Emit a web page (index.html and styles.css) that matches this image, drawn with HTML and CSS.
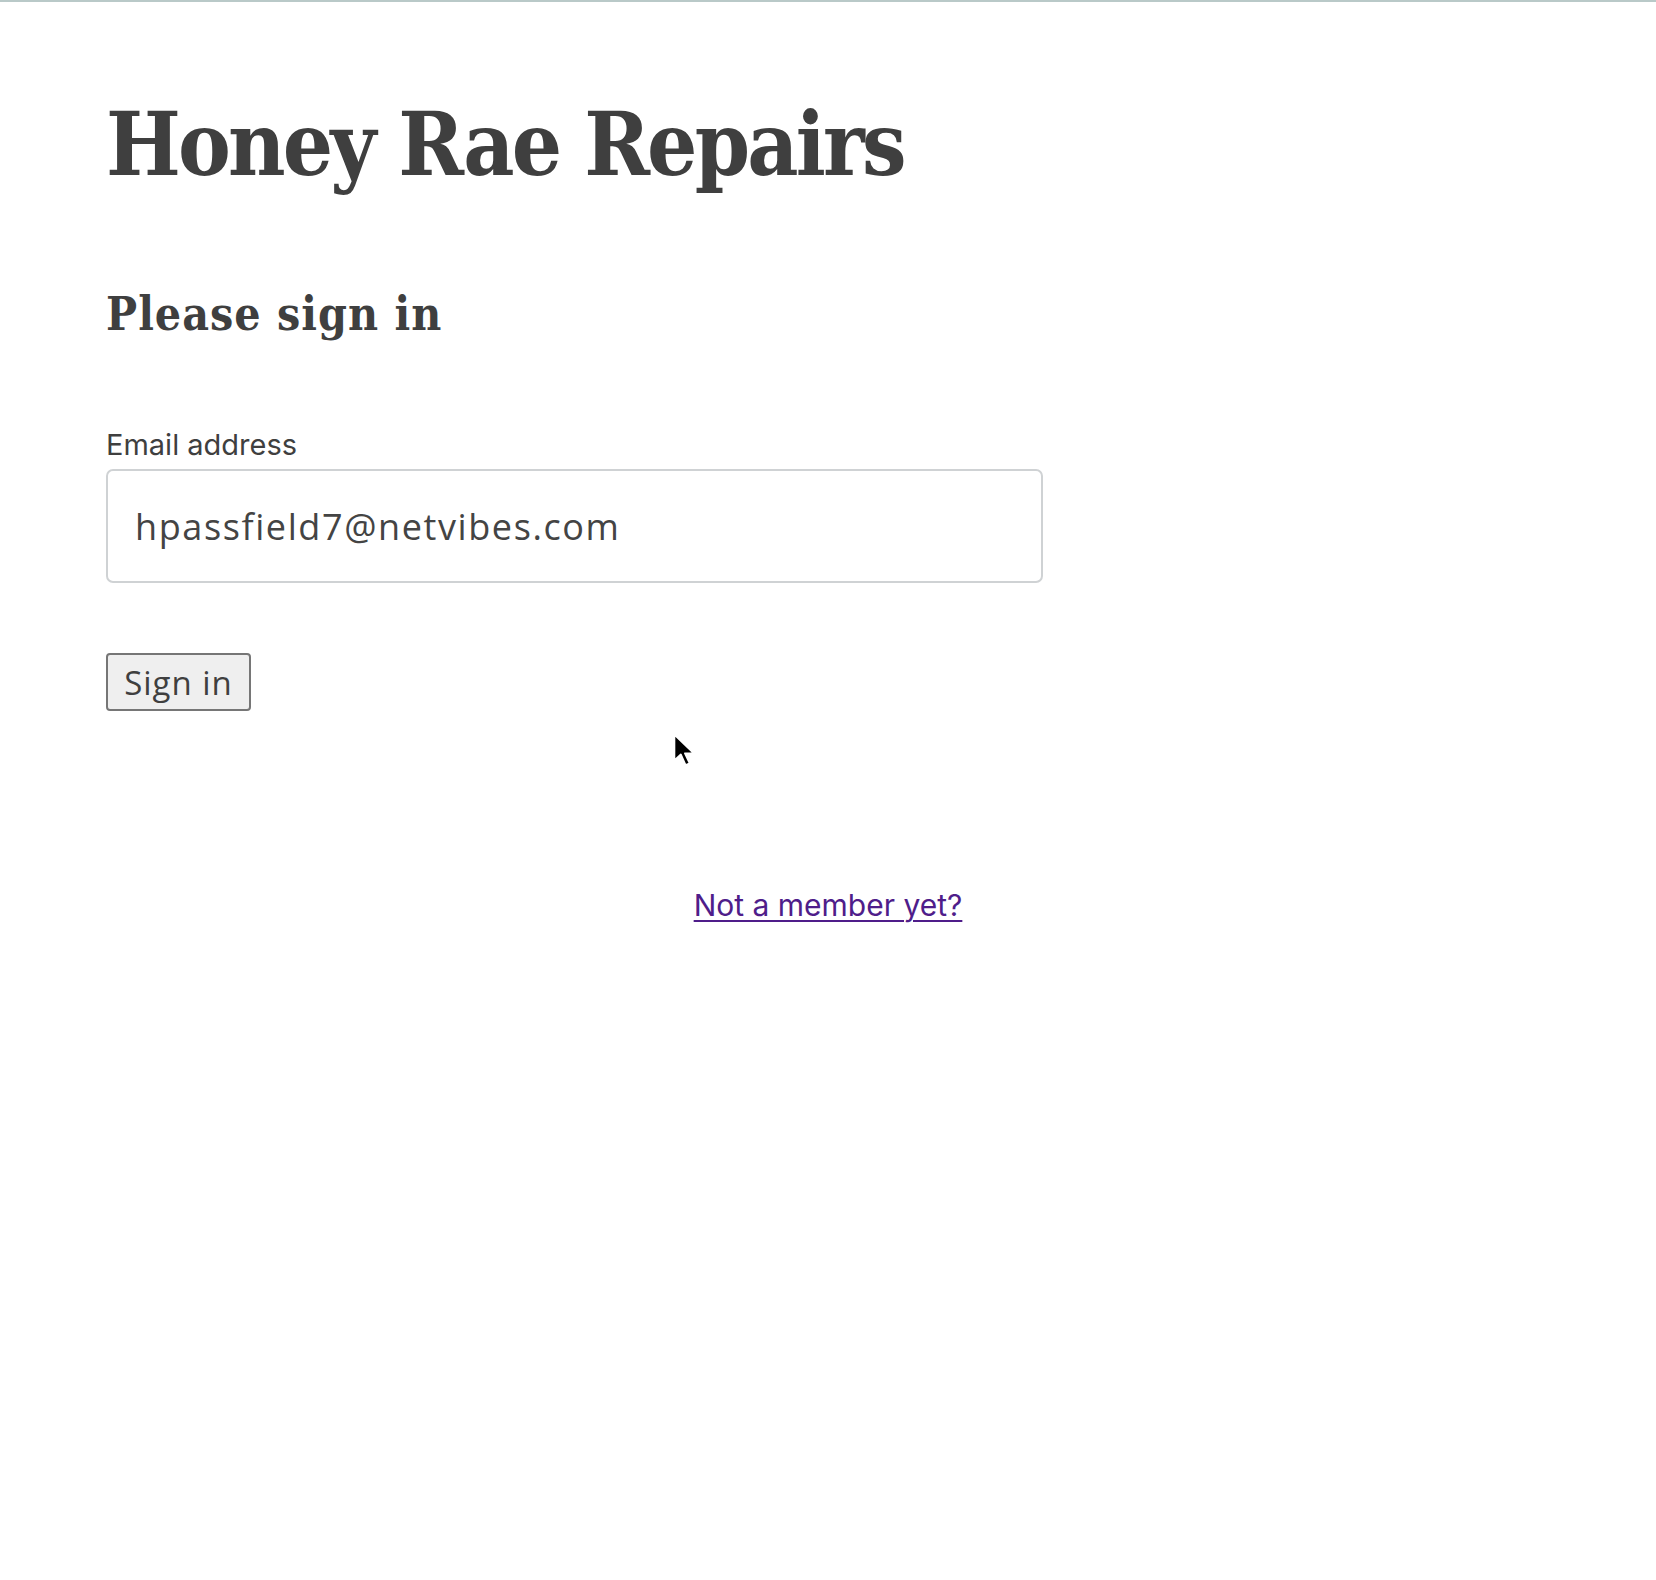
FILE: index.html
```html
<!DOCTYPE html>
<html lang="en">
<head>
<meta charset="utf-8">
<title>Honey Rae Repairs</title>
<link rel="stylesheet" href="styles.css">
</head>
<body>
<div class="topline"></div>
<main class="auth">
  <section class="login">
    <h1 class="brand">Honey Rae Repairs</h1>
    <h2 class="subtitle">Please sign in</h2>
    <form class="form">
      <fieldset class="field">
        <label class="label" for="email">Email address</label>
        <input id="email" class="input" type="email" value="hpassfield7@netvibes.com">
      </fieldset>
      <fieldset class="field">
        <button type="button" class="btn">Sign in</button>
      </fieldset>
    </form>
  </section>
  <section class="register">
    <a class="link" href="#">Not a member yet?</a>
  </section>
</main>
<svg class="cursor" width="26" height="38" viewBox="0 0 22 32"><path d="M2 2 L2 24 L7.5 19 L11.5 28 L15 26.5 L11 18 L18.5 18 Z" fill="#000" stroke="#fff" stroke-width="1.6" stroke-linejoin="round"/></svg>
</body>
</html>
```
FILE: styles.css
```css
html, body {
  margin: 0;
  padding: 0;
  background: #fff;
}
body {
  color: #3f3f3f;
  font-family: "Open Sans", "Liberation Sans", sans-serif;
  min-height: 1580px;
  position: relative;
}
.topline {
  height: 2px;
  background: #b9c9c8;
}
.auth {
  padding: 0 0 0 106px;
}
.brand {
  margin: 86px 0 0;
  font-family: "DejaVu Serif Condensed", "DejaVu Serif", serif;
  font-weight: 700;
  font-size: 88px;
  line-height: 112px;
  letter-spacing: -2.8px;
  color: #3f3f3f;
}
.subtitle {
  margin: 88px 0 0;
  font-family: "DejaVu Serif Condensed", "DejaVu Serif", serif;
  font-weight: 700;
  font-size: 46px;
  line-height: 52px;
  letter-spacing: 1px;
  color: #3f3f3f;
}
.form {
  margin-top: 87px;
}
.field {
  border: 0;
  margin: 0;
  padding: 0;
}
.label {
  display: block;
  font-family: "Inter", "Liberation Sans", sans-serif;
  font-size: 29px;
  line-height: 36px;
  color: #3f3f3f;
  margin-bottom: 6px;
}
.input {
  display: block;
  box-sizing: border-box;
  width: 937px;
  height: 114px;
  border: 2px solid #cfd2d4;
  border-radius: 7px;
  padding: 0 0 0 27px;
  font-family: "Open Sans", "Lato", sans-serif;
  font-size: 36px;
  letter-spacing: 1.6px;
  color: #444;
  outline: none;
}
.field + .field {
  margin-top: 70px;
}
.btn {
  box-sizing: border-box;
  width: 145px;
  height: 58px;
  background: #efefef;
  border: 2px solid #767676;
  border-radius: 4px;
  font-family: "Open Sans", "Lato", sans-serif;
  font-size: 33px;
  letter-spacing: 1px;
  color: #3f3f3f;
  padding: 0;
}
.register {
  text-align: center;
  margin-top: 176px;
  padding-right: 106px;
}
.link {
  font-family: "Inter", "Liberation Sans", sans-serif;
  font-size: 30px;
  color: #4f1d8a;
  text-decoration-thickness: 2px;
  text-underline-offset: 4px;
}
.cursor {
  position: absolute;
  left: 672px;
  top: 732px;
}
```
